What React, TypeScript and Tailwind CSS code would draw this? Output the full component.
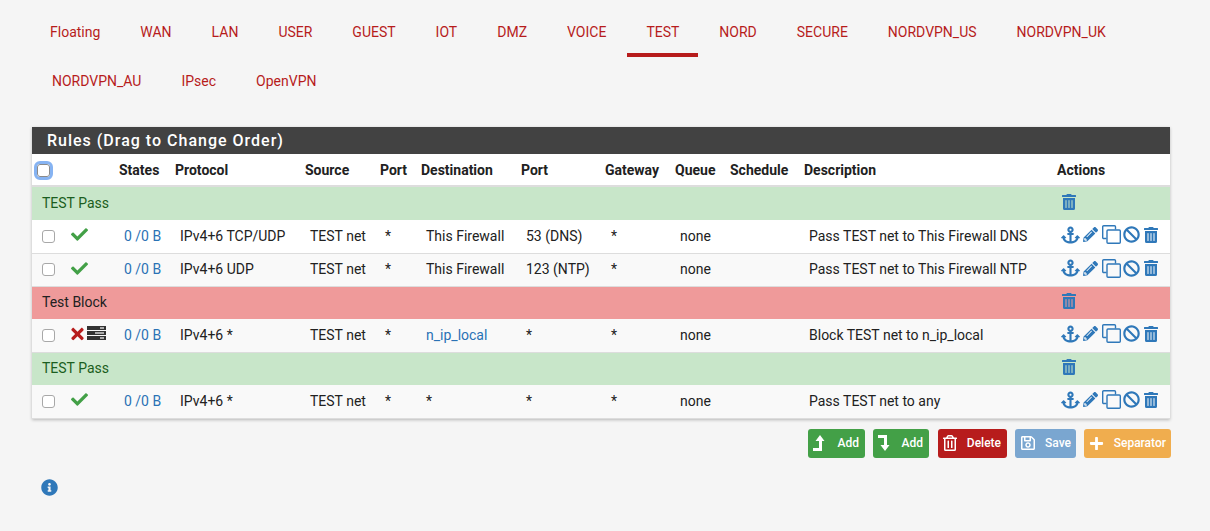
import React from "react";
import { FaAnchor, FaPencilAlt, FaBan, FaTrashAlt, FaRegTrashAlt, FaCheck, FaTimes, FaInfoCircle, FaRegSave, FaPlus } from "react-icons/fa";

const row1 = ["Floating", "WAN", "LAN", "USER", "GUEST", "IOT", "DMZ", "VOICE", "TEST", "NORD", "SECURE", "NORDVPN_US", "NORDVPN_UK"];
const row2 = ["NORDVPN_AU", "IPsec", "OpenVPN"];

function Tab({ label }: { label: string }) {
  const active = label === "TEST";
  return (
    <a className={`block h-[50px] px-[19px] mr-[2px] pt-[15px] text-[14px] leading-[20px] text-[#b71c1c] ${active ? "border-b-[4px] border-[#b71c1c]" : ""}`}>{label}</a>
  );
}

function Box({ focus }: { focus?: boolean }) {
  return (
    <input
      type="checkbox"
      readOnly
      className={`appearance-none block w-[13px] h-[13px] rounded-[3px] bg-white border ${focus ? "border-[#8a8a8a] outline-[3px] outline-[#86b3f2] ml-[-1px]" : "border-[#a8a8a8]"}`}
    />
  );
}

function Clone() {
  return (
    <svg viewBox="0 0 19 19" className="w-[19px] h-[19px]" fill="none" stroke="currentColor" strokeWidth="1.4">
      <path d="M4.5 13.5H1.7a1 1 0 0 1-1-1V1.7a1 1 0 0 1 1-1h10.8a1 1 0 0 1 1 1v2.8" />
      <rect x="5" y="5" width="13.3" height="13.3" rx="1" />
    </svg>
  );
}

function Server() {
  return (
    <svg viewBox="0 0 19 14" className="w-[19px] h-[14px]">
      {[0, 5, 10].map((y) => (
        <g key={y}>
          <rect x="0" y={y} width="19" height="4" fill="#333333" />
          <rect x={y === 5 ? 8 : 13} y={y + 1.2} width={y === 5 ? 9 : 4} height="1.6" fill="#c8c8c8" />
        </g>
      ))}
    </svg>
  );
}

function Actions() {
  return (
    <div className="flex items-center text-[#2f78b9] h-[19px] mb-[3px]">
      <FaAnchor className="w-[19px] h-[18px]" />
      <FaPencilAlt className="w-[15px] h-[15px] ml-[3px]" />
      <span className="ml-[4px]"><Clone /></span>
      <FaBan className="w-[17px] h-[17px] ml-[2px]" />
      <FaTrashAlt className="w-[14px] h-[16px] ml-[4px]" />
    </div>
  );
}

function Sep({ label, red, first }: { label: string; red?: boolean; first?: boolean }) {
  return (
    <tr className={`${red ? "bg-[#ef9a9a]" : "bg-[#c8e6c9]"}`}>
      <td colSpan={13} className={`p-0 ${first ? "h-[34px]" : "h-[33px]"}`}>
        <div className="flex items-center justify-between pl-[10px] pr-[94px]">
          <span className={`text-[14px] ${red ? "text-[#212121]" : "text-[#1b5e20]"}`}>{label}</span>
          <FaTrashAlt className="w-[14px] h-[16px] text-[#2f78b9] mb-[3px]" />
        </div>
      </td>
    </tr>
  );
}

type R = { ok: boolean; proto: string; dest: string; link?: boolean; port: string; desc: string; stripe?: boolean };

function Row({ ok, proto, dest, link, port, desc, stripe }: R) {
  const td = "pl-[10px] pr-0 py-0 whitespace-nowrap";
  return (
    <tr className={`h-[33px] border-b border-[#dddddd] text-[14px] text-[#212121] ${stripe ? "bg-[#f9f9f9]" : "bg-white"}`}>
      <td className={td}><Box /></td>
      <td className="pl-[11px] p-0">
        {ok ? (
          <FaCheck className="w-[17px] h-[17px] text-[#43a047] mb-[3px]" />
        ) : (
          <span className="flex items-center gap-[3px] mb-[2px]">
            <FaTimes className="w-[13px] h-[18px] text-[#b71c1c]" />
            <span className="mb-[3px]"><Server /></span>
          </span>
        )}
      </td>
      <td className={`${td} text-[#2a72b5]`}>0 /0 B</td>
      <td className={td}>{proto}</td>
      <td className={td}>TEST net</td>
      <td className={td}>*</td>
      <td className={`${td} ${link ? "text-[#2a72b5]" : ""}`}>{dest}</td>
      <td className={td}>{port}</td>
      <td className={`${td} pl-[11px]`}>*</td>
      <td className={td}>none</td>
      <td className={td}></td>
      <td className={td}>{desc}</td>
      <td className="pl-[9px] p-0"><Actions /></td>
    </tr>
  );
}

function LevelUp() {
  return (
    <svg viewBox="0 0 12 16" className="w-[12px] h-[16px]" fill="currentColor">
      <path d="M7 0l4.5 6H9v10H0v-3h6V6H2.5z" />
    </svg>
  );
}

function LevelDown() {
  return (
    <svg viewBox="0 0 12 16" className="w-[12px] h-[16px]" fill="currentColor">
      <path d="M0 0h9v10h2.5L7 16 2.5 10H6V3H0z" />
    </svg>
  );
}

function Btn({ icon, label, bg, w }: { icon: React.ReactNode; label: string; bg: string; w: string }) {
  return (
    <button className={`flex items-center h-[29px] rounded-[3px] pl-[5px] text-[12px] font-medium text-white ${bg} ${w}`}>
      <span className="flex">{icon}</span>
      <span className="ml-auto">{label}</span>
    </button>
  );
}

const th = "pl-[5px] pr-0 pt-[2px] pb-0 text-left font-bold text-[14px] text-[#212121] whitespace-nowrap";

export default function App() {
  return (
    <div className="w-[1210px] h-[531px] overflow-hidden bg-[#f5f5f5] font-['Roboto',sans-serif]">
      <div className="flex h-[56px] pl-[31px] pt-[7px]">
        {row1.map((t) => <Tab key={t} label={t} />)}
      </div>
      <div className="flex h-[50px] pl-[33px]">
        {row2.map((t) => <Tab key={t} label={t} />)}
      </div>
      <div className="mx-[32px] w-[1138px] mt-[21px] bg-white shadow-[0_1px_3px_rgba(0,0,0,0.25)]">
        <div className="h-[27px] bg-[#424242] pl-[15px] text-[16px] leading-[27px] font-medium tracking-[1px] text-white">Rules (Drag to Change Order)</div>
        <table className="w-full table-fixed border-collapse">
          <colgroup>
            <col className="w-[28px]" />
            <col className="w-[54px]" />
            <col className="w-[56px]" />
            <col className="w-[130px]" />
            <col className="w-[75px]" />
            <col className="w-[41px]" />
            <col className="w-[100px]" />
            <col className="w-[84px]" />
            <col className="w-[70px]" />
            <col className="w-[55px]" />
            <col className="w-[74px]" />
            <col className="w-[253px]" />
            <col className="w-[118px]" />
          </colgroup>
          <thead>
            <tr className="h-[32px] border-b-2 border-[#dddddd]">
              <th className="pl-[6px] pr-0 pt-[2px] pb-0"><Box focus /></th>
              <th className={th}></th>
              <th className={th}>States</th>
              <th className={th}>Protocol</th>
              <th className={th}>Source</th>
              <th className={th}>Port</th>
              <th className={th}>Destination</th>
              <th className={th}>Port</th>
              <th className={th}>Gateway</th>
              <th className={th}>Queue</th>
              <th className={th}>Schedule</th>
              <th className={th}>Description</th>
              <th className={th}>Actions</th>
            </tr>
          </thead>
          <tbody>
            <Sep label="TEST Pass" first />
            <Row ok proto="IPv4+6 TCP/UDP" dest="This Firewall" port="53 (DNS)" desc="Pass TEST net to This Firewall DNS" />
            <Row ok proto="IPv4+6 UDP" dest="This Firewall" port="123 (NTP)" desc="Pass TEST net to This Firewall NTP" stripe />
            <Sep label="Test Block" red />
            <Row ok={false} proto="IPv4+6 *" dest="n_ip_local" link port="*" desc="Block TEST net to n_ip_local" stripe />
            <Sep label="TEST Pass" />
            <Row ok proto="IPv4+6 *" dest="*" port="*" desc="Pass TEST net to any" stripe />
          </tbody>
        </table>
      </div>
      <div className="flex justify-end gap-[8px] w-[1171px] mt-[10px]">
        <Btn icon={<LevelUp />} label="Add" bg="bg-[#43a047] pr-[6px]" w="w-[57px]" />
        <Btn icon={<LevelDown />} label="Add" bg="bg-[#43a047] pr-[6px] mr-[1px]" w="w-[56px]" />
        <Btn icon={<FaRegTrashAlt className="w-[14px] h-[16px]" />} label="Delete" bg="bg-[#b71c1c] pr-[6px]" w="w-[69px]" />
        <Btn icon={<FaRegSave className="w-[16px] h-[16px]" />} label="Save" bg="bg-[#7aa6d0] pr-[5px]" w="w-[61px]" />
        <Btn icon={<FaPlus className="w-[15px] h-[15px]" />} label="Separator" bg="bg-[#f0ad4e] pr-[5px]" w="w-[87px]" />
      </div>
      <div className="pl-[41px] mt-[21px]">
        <FaInfoCircle className="w-[17px] h-[17px] text-[#2f78b9]" />
      </div>
    </div>
  );
}
